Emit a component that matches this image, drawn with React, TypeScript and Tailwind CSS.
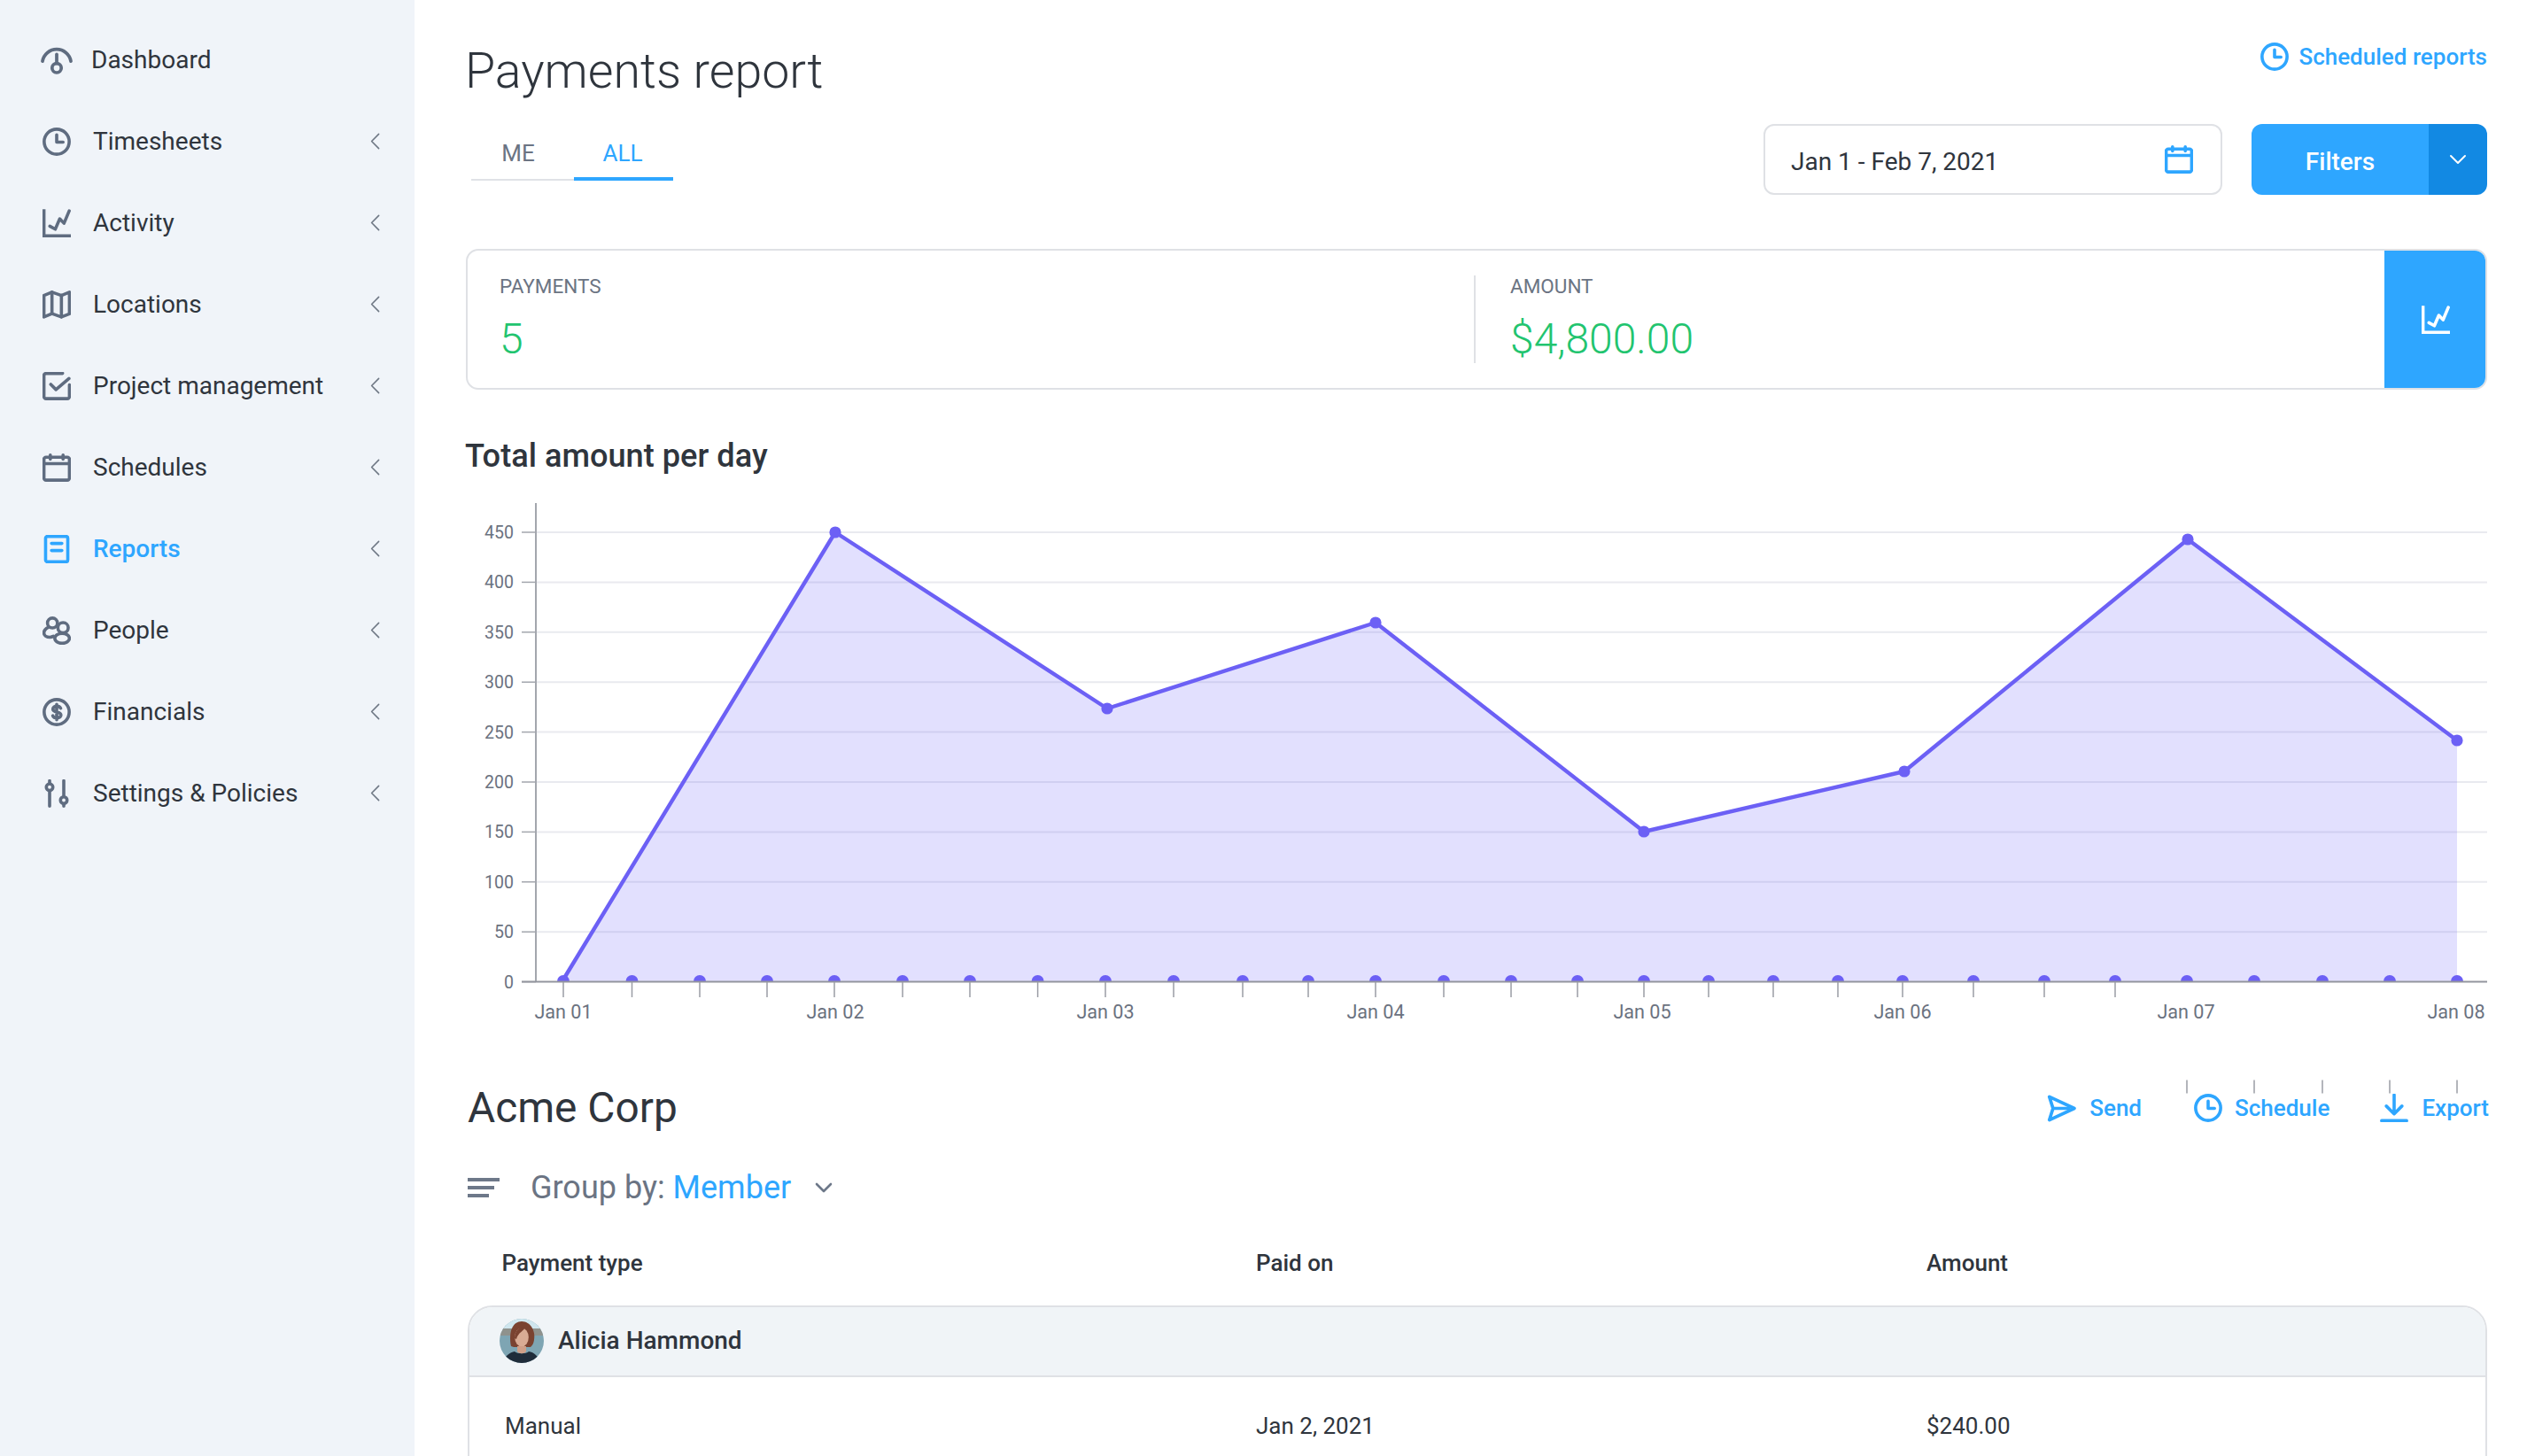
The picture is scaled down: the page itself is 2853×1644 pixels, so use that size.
import type { ReactNode } from "react"

const gray = "#5f6c80"
const blue = "#2ea6ff"

function Icon({ children, color = gray, size = 32, sw = 2.7 }: { children: ReactNode; color?: string; size?: number; sw?: number }) {
  return (
    <svg width={size} height={size} viewBox="0 0 24 24" fill="none" stroke={color} strokeWidth={sw} strokeLinecap="round" strokeLinejoin="round" className="shrink-0">
      {children}
    </svg>
  )
}

const ClockPaths = (
  <>
    <circle cx="12" cy="12" r="10.6" />
    <path d="M12 6.2V12.4h5.4" />
  </>
)

const ChartPaths = (
  <>
    <path d="M1.2 1.5V22.8H22.8" strokeLinecap="square" strokeLinejoin="miter" />
    <path d="M6.2 14.5l4.6 2.6 3.8-8.8 3.6 3.8 4.4-10.5" />
  </>
)

const CalendarPaths = (
  <>
    <rect x="1.2" y="3.2" width="21.6" height="19.4" rx="1.8" />
    <path d="M1.2 8.6h21.6M6.6 1.4v3.4M17.4 1.4v3.4" />
  </>
)

const navItems: { label: string; icon: ReactNode; chevron?: boolean; active?: boolean }[] = [
  {
    label: "Dashboard",
    icon: (
      <svg width="36" height="32" viewBox="0 0 27 24" fill="none" stroke={gray} strokeWidth="2.8" strokeLinecap="round" className="shrink-0">
        <path d="M1.5 12.8a12.2 12.2 0 0 1 24 0" />
        <circle cx="13.5" cy="18.6" r="3.9" />
        <path d="M13.5 14.6V7" />
      </svg>
    ),
  },
  { label: "Timesheets", chevron: true, icon: <Icon>{ClockPaths}</Icon> },
  { label: "Activity", chevron: true, icon: <Icon>{ChartPaths}</Icon> },
  {
    label: "Locations",
    chevron: true,
    icon: (
      <Icon>
        <path d="M1.2 4.2L8 1.4l8 2.8 6.8-2.8v18.4L16 22.4l-8-2.8-6.8 2.8z" />
        <path d="M8 1.4v18.2M16 4.2v18.2" />
      </Icon>
    ),
  },
  {
    label: "Project management",
    chevron: true,
    icon: (
      <Icon>
        <path d="M22.8 11v9.8a1.8 1.8 0 0 1-1.8 1.8H3a1.8 1.8 0 0 1-1.8-1.8V3A1.8 1.8 0 0 1 3 1.2h14" />
        <path d="M7 10.5l4.4 4.4 11-9.4" />
      </Icon>
    ),
  },
  { label: "Schedules", chevron: true, icon: <Icon>{CalendarPaths}</Icon> },
  {
    label: "Reports",
    chevron: true,
    active: true,
    icon: (
      <Icon color={blue}>
        <rect x="2.6" y="1.2" width="18.8" height="21.6" rx="1.6" />
        <path d="M7.6 7.2h8.8M7.6 13.2h8.8" />
      </Icon>
    ),
  },
  {
    label: "People",
    chevron: true,
    icon: (
      <Icon>
        <circle cx="8.4" cy="5.6" r="4.2" />
        <circle cx="17.4" cy="9.6" r="4.4" />
        <path d="M4.8 9.2C2.4 10.4 1.2 12.2 1.2 14c0 2.2 2.4 3.6 5 3.6 1.2 0 2.2-.3 3-.8" />
        <ellipse cx="16.6" cy="18.6" rx="6.2" ry="4.2" />
      </Icon>
    ),
  },
  {
    label: "Financials",
    chevron: true,
    icon: (
      <Icon>
        <circle cx="12" cy="12" r="10.6" />
        <path d="M15.4 8.8c-.5-1-1.6-1.8-3.2-1.8-2 0-3.4 1-3.4 2.5 0 3.4 6.8 1.6 6.8 5 0 1.5-1.4 2.5-3.5 2.5-1.7 0-2.9-.8-3.4-1.9M12 5.4v13.2" />
      </Icon>
    ),
  },
  {
    label: "Settings & Policies",
    chevron: true,
    icon: (
      <Icon>
        <path d="M6 1.2v2.2M6 10v12.6M18 1.2v13M18 21v1.6" />
        <circle cx="6" cy="6.6" r="2.8" />
        <circle cx="18" cy="17.6" r="2.8" />
      </Icon>
    ),
  },
]

function Sidebar() {
  return (
    <aside className="flex h-full w-[468px] shrink-0 flex-col bg-[#f0f4f9] pt-[22px]">
      {navItems.map((item, i) => (
        <div key={item.label} className="flex h-[92px] shrink-0 items-center pl-[48px] pr-[39px]">
          <div className={i === 0 ? "-ml-[2px] flex w-[57px] shrink-0" : "flex w-[57px] shrink-0"}>{item.icon}</div>
          <span className={item.active ? "flex-1 text-[28px] font-medium text-[#2ea6ff]" : "flex-1 text-[28px] text-[#2f353d]"}>{item.label}</span>
          {item.chevron && (
            <svg width="11" height="19" viewBox="0 0 11 19" className="mb-[2px]" fill="none" stroke="#6f7885" strokeWidth="1.6" strokeLinecap="round" strokeLinejoin="round">
              <path d="M9.6 1.4L1.6 9.5l8 8.1" />
            </svg>
          )}
        </div>
      ))}
    </aside>
  )
}

const yTicks = [450, 400, 350, 300, 250, 200, 150, 100, 50, 0]
const yFor = (v: number) => 1108.6 - (v / 450) * 507.6

const tickXs = [636, 713.5, 790, 866, 942, 1019, 1095, 1171.6, 1248, 1325, 1403, 1477, 1553, 1630, 1706, 1781, 1856, 1929, 2002, 2075, 2148, 2228, 2308, 2388, 2469, 2545, 2622, 2698, 2774]
const strayTicks = tickXs.slice(24)
const points: [number, number][] = [
  [636, 1106],
  [943, 601],
  [1250, 800],
  [1553, 703],
  [1856, 939],
  [2150, 871],
  [2470, 609],
  [2774, 836],
]
const xLabels: [string, number][] = [
  ["Jan 01", 636],
  ["Jan 02", 943],
  ["Jan 03", 1248],
  ["Jan 04", 1553],
  ["Jan 05", 1854],
  ["Jan 06", 2148],
  ["Jan 07", 2468],
  ["Jan 08", 2773],
]

function Chart() {
  const line = points.map((p) => p.join(",")).join(" ")
  return (
    <svg width="2282" height="600" viewBox="526 560 2282 600" className="block overflow-visible" style={{ fontFamily: "Roboto, sans-serif" }}>
      <defs>
        <clipPath id="above-axis">
          <rect x="526" y="560" width="2282" height="548" />
        </clipPath>
      </defs>
      {yTicks.map((v) => (
        <g key={v}>
          {v !== 0 && <line x1="605" x2="2808" y1={yFor(v)} y2={yFor(v)} stroke="#e9eaef" strokeWidth="2" />}
          <line x1="589" x2="605" y1={yFor(v)} y2={yFor(v)} stroke="#a3a6ad" strokeWidth="1.5" />
          <text x="580" y={yFor(v) + 7} textAnchor="end" fontSize="19.5" fill="#6b7280">
            {v}
          </text>
        </g>
      ))}
      <polygon points={`636,1108 ${line} 2774,1108`} fill="#6c63f8" fillOpacity="0.2" />
      <polyline points={line} fill="none" stroke="#6c60f5" strokeWidth="4.4" strokeLinejoin="round" />
      <g clipPath="url(#above-axis)" fill="#6c60f5">
        {tickXs.map((x) => (
          <circle key={x} cx={x} cy="1108" r="7" />
        ))}
      </g>
      {points.slice(1).map(([x, y]) => (
        <circle key={x} cx={x} cy={y} r="6.6" fill="#6c60f5" />
      ))}
      <line x1="605" x2="605" y1="568" y2="1108.6" stroke="#a3a6ad" strokeWidth="2" />
      <line x1="589" x2="2808" y1="1108.6" y2="1108.6" stroke="#93959e" strokeWidth="2" />
      {tickXs.slice(0, 24).map((x) => (
        <line key={x} x1={x} x2={x} y1="1109" y2="1126" stroke="#9a9da5" strokeWidth="1.5" />
      ))}
      {strayTicks.map((x) => (
        <line key={x} x1={x} x2={x} y1="1219.5" y2="1234.5" stroke="#9a9da5" strokeWidth="1.5" />
      ))}
      {xLabels.map(([label, x]) => (
        <text key={label} x={x} y="1150" textAnchor="middle" fontSize="21.6" fill="#6b7280">
          {label}
        </text>
      ))}
    </svg>
  )
}

function Avatar() {
  return (
    <svg width="50" height="50" viewBox="0 0 50 50" className="shrink-0 rounded-full">
      <rect width="50" height="50" fill="#7ea5b3" />
      <rect width="50" height="11" fill="#cfe6ee" />
      <rect y="11" width="50" height="8" fill="#8f928d" />
      <path d="M13 31C10 14 15 3 25 3s16 11 14 21c-.5 3-1.500 6-4 8H16z" fill="#7a4230" />
      <ellipse cx="25" cy="21" rx="7.8" ry="10.5" fill="#d9ab94" />
      <path d="M17 22c.5-9 5-13 12-13-1 5-8 6-10 14z" fill="#7a4230" />
      <path d="M4 50c1-8 8-12 13-13 3 3 13 3 16 0 6 1 11 5 13 13z" fill="#1f2c3a" />
      <path d="M20 31h10v6c-2 3-8 3-10 0z" fill="#cf9f88" />
    </svg>
  )
}

function LinkAction({ icon, label, className }: { icon: ReactNode; label: string; className?: string }) {
  return (
    <div className={`flex items-center text-[26px] font-medium text-[#2ea6ff] ${className ?? ""}`}>
      {icon}
      <span>{label}</span>
    </div>
  )
}

export default function App() {
  return (
    <div className="flex h-[1644px] w-[2853px] overflow-hidden bg-white font-['Roboto',sans-serif]">
      <Sidebar />
      <main className="flex min-w-0 flex-1 flex-col pl-[58px] pr-[45px]">
        <div className="flex h-[281px] shrink-0 justify-between">
          <div>
            <h1 className="mt-[45px] -ml-[1px] text-[55.5px] font-light leading-[72px] text-[#2f353d]">Payments report</h1>
            <div className="mt-[37px] ml-[6px] flex h-[50px] w-[228px] text-[26px]">
              <div className="flex w-[116px] justify-center border-b-2 border-[#e0e2e6] pr-[10px] text-[#6b7483]">ME</div>
              <div className="flex w-[112px] justify-center border-b-4 border-[#2ea6ff] pr-[2px] text-[#2ea6ff]">ALL</div>
            </div>
          </div>
          <div className="flex flex-col items-end">
            <div className="mt-[48px] flex h-[32px] items-center gap-[11px] text-[26px] font-medium text-[#2ea6ff]">
              <Icon color={blue}>{ClockPaths}</Icon>
              <span>Scheduled reports</span>
            </div>
            <div className="mt-[60px] flex items-center gap-[33px]">
              <div className="flex h-[80px] w-[518px] items-center justify-between rounded-[12px] border-2 border-[#dfe1e5] pl-[29px] pr-[31px] text-[28px] text-[#2f353d]">
                <span className="mt-[5px]">Jan 1 - Feb 7, 2021</span>
                <Icon color={blue}>{CalendarPaths}</Icon>
              </div>
              <div className="flex h-[80px] w-[266px] overflow-hidden rounded-[12px] text-white">
                <div className="flex w-[200px] items-center justify-center bg-[#2ea6ff] pt-[5px] text-[28px] font-medium">Filters</div>
                <div className="flex flex-1 items-center justify-center bg-[#1289e3]">
                  <svg width="20" height="12" viewBox="0 0 20 12" fill="none" stroke="white" strokeWidth="2" strokeLinecap="round" strokeLinejoin="round">
                    <path d="M2 2l8 8 8-8" />
                  </svg>
                </div>
              </div>
            </div>
          </div>
        </div>

        <div className="flex h-[159px] shrink-0 overflow-hidden rounded-[14px] border-2 border-[#dfe1e5]">
          <div className="flex flex-1 items-center">
            <div className="w-[1136px] pl-[36px] pt-[1px]">
              <div className="text-[22.5px] leading-[28px] text-[#6b7483]">PAYMENTS</div>
              <div className="mt-[16px] text-[48px] font-light leading-[60px] text-[#22c46f]">5</div>
            </div>
            <div className="h-[99px] w-[2px] bg-[#dfe1e5]" />
            <div className="pl-[39px] pt-[1px]">
              <div className="text-[22.5px] leading-[28px] text-[#6b7483]">AMOUNT</div>
              <div className="mt-[16px] text-[48px] font-light leading-[60px] text-[#22c46f]">$4,800.00</div>
            </div>
          </div>
          <div className="-my-[2px] -mr-[2px] flex w-[116px] items-center justify-center bg-[#2ea6ff]">
            <Icon color="white">{ChartPaths}</Icon>
          </div>
        </div>

        <h2 className="mt-[52px] -ml-[1px] text-[36.2px] font-medium leading-[46px] text-[#2f353d]">Total amount per day</h2>
        <div className="mt-[21.5px] shrink-0">
          <Chart />
        </div>

        <div className="mt-[57.5px] ml-[2px] flex h-[68px] shrink-0 items-center justify-between">
          <h2 className="text-[47.8px] leading-[68px] text-[#2f353d]">Acme Corp</h2>
          <div className="-mr-[2px] flex items-center">
            <LinkAction
              label="Send"
              className="mr-[59px] gap-[15px]"
              icon={
                <Icon color={blue} size={33}>
                  <path d="M2 2.5L22.5 12 2 21.5 5 12z" />
                  <path d="M5 12h13" />
                </Icon>
              }
            />
            <LinkAction label="Schedule" className="mr-[57px] gap-[14px]" icon={<Icon color={blue}>{ClockPaths}</Icon>} />
            <LinkAction
              label="Export"
              className="gap-[15px]"
              icon={
                <Icon color={blue}>
                  <path d="M12 1v15.6M5.4 10.4l6.6 6.6 6.6-6.6M1.4 22.8h21.2" />
                </Icon>
              }
            />
          </div>
        </div>

        <div className="mt-[34px] ml-[2px] flex h-[44px] shrink-0 items-center text-[36px]">
          <svg width="36" height="22" viewBox="0 0 36 22" className="mr-[35px] shrink-0" fill="#6d7889">
            <rect width="36" height="4" />
            <rect y="9" width="30" height="4" />
            <rect y="18" width="24" height="4" />
          </svg>
          <span className="text-[#6b7483]">Group by:&nbsp;</span>
          <span className="text-[#2ea6ff]">Member</span>
          <svg width="22" height="14" viewBox="0 0 22 14" className="ml-[26px]" fill="none" stroke="#6d7889" strokeWidth="2.6" strokeLinecap="round" strokeLinejoin="round">
            <path d="M3 3l8 8 8-8" />
          </svg>
        </div>

        <div className="mt-[45.5px] flex h-[36px] shrink-0 items-center text-[26px] font-medium text-[#2f353d]">
          <div className="w-[892px] pl-[40.5px]">Payment type</div>
          <div className="w-[757px]">Paid on</div>
          <div>Amount</div>
        </div>

        <div className="mt-[29px] ml-[2px] shrink-0 overflow-hidden rounded-t-[28px] border-2 border-[#dfe1e5]">
          <div className="flex h-[79px] items-center gap-[16px] border-b-2 border-[#dfe1e5] bg-[#f0f4f7] pl-[34px] text-[28px] font-medium text-[#2f353d]">
            <Avatar />
            <span>Alicia Hammond</span>
          </div>
          <div className="flex h-[111px] items-center text-[26px] text-[#2f353d]">
            <div className="w-[888px] pl-[40px]">Manual</div>
            <div className="w-[757px]">Jan 2, 2021</div>
            <div>$240.00</div>
          </div>
        </div>
      </main>
    </div>
  )
}
